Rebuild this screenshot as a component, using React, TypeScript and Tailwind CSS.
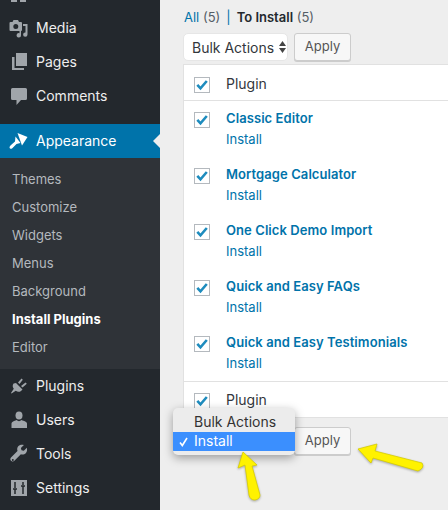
import React from 'react';

const font = { fontFamily: 'Inter' };

function MediaIcon() {
  return (
    <svg width="20" height="20" viewBox="0 0 20 20" fill="#a0a5aa">
      <path fillRule="evenodd" d="M1.500 4H3.500L4.500 2H9L10 4H12a1 1 0 0 1 1 1v7a1 1 0 0 1-1 1H1.500a1 1 0 0 1-1-1V5a1 1 0 0 1 1-1zM6.800 6a2.500 2.500 0 1 0 0 5 2.500 2.500 0 0 0 0-5z" />
      <path d="M14 6h4.500v10.500a2.200 2.200 0 1 1-2-2.100V8H14z" />
      <path d="M10.500 12H12v5.200a2.200 2.200 0 1 1-1.500-2z" />
    </svg>
  );
}

function PagesIcon() {
  return (
    <svg width="20" height="20" viewBox="0 0 20 20" fill="#a0a5aa">
      <path d="M7 1h11v13H7z" />
      <path d="M3 5h2.500v11H15v2H3z" />
    </svg>
  );
}

function CommentsIcon() {
  return (
    <svg width="20" height="20" viewBox="0 0 20 20" fill="#a0a5aa">
      <path d="M3.500 2h13A1.500 1.500 0 0 1 18 3.500v9a1.500 1.500 0 0 1-1.500 1.500H12l-4.500 5v-5h-4A1.500 1.500 0 0 1 2 12.500v-9A1.500 1.500 0 0 1 3.500 2z" />
    </svg>
  );
}

function BrushIcon() {
  return (
    <svg width="20" height="20" viewBox="0 0 20 20" fill="#fff">
      <path d="M8.500 2L18.500 6L13 14.500z" />
      <path d="M6.500 5.500L11.500 12L7.500 13L3 17.500Q1 18.500 .5 16.500Q.5 15 2 14L6 10.500z" />
    </svg>
  );
}

function PlugIcon() {
  return (
    <svg width="20" height="20" viewBox="0 0 20 20" fill="#a0a5aa">
      <path d="M7 7l6.500 6.500-1.500 1.500c-1.800 1.300-3.800 1-5.200-.3l-4.300 2.800-.5-.5 2.800-4.300c-1.300-1.400-1.500-3.400-.2-5.200z" />
      <path d="M9 6.500l3.500-4 1.300 1.300-3.300 4.200z" />
      <path d="M12 10l4.500-3.500 1.300 1.300-4.300 3.700z" />
    </svg>
  );
}

function UserIcon() {
  return (
    <svg width="20" height="20" viewBox="0 0 20 20" fill="#a0a5aa">
      <ellipse cx="10" cy="5.500" rx="3.500" ry="4" />
      <path d="M7.500 10c1.500 1.500 3.500 1.500 5 0l1 .5c2.500.5 4.500 1.500 4.500 3V18H2.500v-4.500c0-1.500 2-2.500 4-3z" />
    </svg>
  );
}

function WrenchIcon() {
  return (
    <svg width="20" height="20" viewBox="0 0 20 20" fill="#a0a5aa">
      <path d="M17.800 3.800l-3 3-2.300-.6-.6-2.300 3-3c-2-.6-4.200-.2-5.400 1.200-1.300 1.300-1.600 3.200-1 4.800l-6.500 6.500c-.9.900-.9 2.400 0 3.400s2.500.9 3.400 0l6.500-6.500c1.700.6 3.600.2 4.900-1 1.300-1.300 1.600-3.500 1-5.500zM3.800 16.900a1 1 0 1 1 0-2 1 1 0 0 1 0 2z" />
    </svg>
  );
}

function SlidersIcon() {
  return (
    <svg width="20" height="20" viewBox="0 0 20 20">
      <path d="M2 2h16v16H2z" fill="#a0a5aa" />
      <path d="M6 4v6M4 11h4M6 11v5M14 4v3M12 8h4M14 8v8" stroke="#23282d" strokeWidth="1.500" fill="none" />
    </svg>
  );
}

function MenuRow({ icon, label }: { icon: React.ReactNode; label: string }) {
  return (
    <div className="flex h-[34px] items-center text-[14px] text-[#eeeeee]">
      <span className="ml-[9px] mr-[7px] flex w-[20px] justify-center">{icon}</span>
      <span className="mb-[2px]">{label}</span>
    </div>
  );
}

function Check() {
  return (
    <span className="flex h-[16px] w-[16px] shrink-0 items-center justify-center border border-[#b4b9be] bg-white">
      <svg width="14" height="14" viewBox="0 0 14 14">
        <path d="M2.300 6.800L5.500 10.300L11.800 3" fill="none" stroke="#1e8cbe" strokeWidth="2.600" />
      </svg>
    </span>
  );
}

function PluginRow({ name }: { name: string }) {
  return (
    <div className="flex h-[56px] items-start pl-[10px] pt-[8px]">
      <span className="mt-[3px]"><Check /></span>
      <div className="ml-[16px] text-[13px] leading-[18px]">
        <div className="font-semibold tracking-[0.08px] text-[#0073aa]">{name}</div>
        <div className="mt-[3px] text-[#0073aa]">Install</div>
      </div>
    </div>
  );
}

function HeadRow({ className }: { className: string }) {
  return (
    <div className={`flex h-[36px] items-center pl-[10px] text-[14px] text-[#32373c] ${className}`}>
      <span className="mt-[3px]"><Check /></span>
      <span className="ml-[16px]">Plugin</span>
    </div>
  );
}

function ApplyButton() {
  return (
    <button className="h-[28px] w-[57px] rounded-[3px] border border-[#cccccc] bg-[#f7f7f7] text-[13px] text-[#555555] shadow-[0_1px_0_#cccccc]">
      Apply
    </button>
  );
}

const subItems = ['Themes', 'Customize', 'Widgets', 'Menus', 'Background', 'Install Plugins', 'Editor'];
const plugins = ['Classic Editor', 'Mortgage Calculator', 'One Click Demo Import', 'Quick and Easy FAQs', 'Quick and Easy Testimonials'];

export default function App() {
  return (
    <div className="relative flex h-[510px] w-[448px] overflow-hidden bg-[#eeeeee]" style={font}>
      {/* Admin sidebar */}
      <aside className="h-full w-[160px] shrink-0 bg-[#23282d]">
        <div className="-mt-[23px]">
          <MenuRow label="" icon={
            <svg width="20" height="20" viewBox="0 0 20 20" fill="#a0a5aa">
              <path d="M2 13h6v5H2zM11 13h6v5h-6z" />
            </svg>
          } />
          <MenuRow icon={<MediaIcon />} label="Media" />
          <MenuRow icon={<PagesIcon />} label="Pages" />
          <MenuRow icon={<CommentsIcon />} label="Comments" />
        </div>
        <div className="relative mt-[11px] flex h-[34px] items-center bg-[#0073aa] text-[14px] text-white">
          <span className="ml-[9px] mr-[7px] flex w-[20px] justify-center"><BrushIcon /></span>
          <span className="mb-[2px]">Appearance</span>
          <span className="absolute right-0 top-[10px] border-y-[7px] border-r-[7px] border-y-transparent border-r-[#eeeeee]" />
        </div>
        <div className="h-[211px] bg-[#2f3338] pt-[7px]">
          {subItems.map((item) => (
            <div
              key={item}
              className={`flex h-[28px] items-center pl-[12px] pt-[2px] text-[13px] ${item === 'Install Plugins' ? 'font-bold text-white' : 'text-[#b4b9be]'}`}
            >
              {item}
            </div>
          ))}
        </div>
        <MenuRow icon={<PlugIcon />} label="Plugins" />
        <MenuRow icon={<UserIcon />} label="Users" />
        <MenuRow icon={<WrenchIcon />} label="Tools" />
        <MenuRow icon={<SlidersIcon />} label="Settings" />
      </aside>

      {/* Plugin table */}
      <main className="min-w-0 flex-1 pl-[23px]">
        <div className="ml-[1px] mt-[8px] h-[18px] text-[13px] leading-[18px] text-[#555d66]">
          <span className="text-[#0073aa]">All</span> (5)
          <span className="mx-[6px] text-[#0073aa]">|</span>
          <span className="font-semibold text-[#23282d]">To Install</span> (5)
        </div>
        <div className="mt-[7px] flex h-[28px] items-start">
          <div className="flex h-[28px] w-[105px] items-center whitespace-nowrap rounded-[5px] border border-[#e6e6e6] bg-white pl-[8px] text-[14px] text-[#32373c]">
            Bulk Actions
            <svg className="ml-[5px]" width="7" height="12" viewBox="0 0 7 12" fill="#444444">
              <path d="M3.500 0L7 5H0zM3.500 12L0 7h7z" />
            </svg>
          </div>
          <span className="ml-[6px]"><ApplyButton /></span>
        </div>
        <div className="mt-[3px] h-[354px] w-[280px] border border-[#e1e1e1] bg-white">
          <HeadRow className="border-b border-[#e1e1e1] pt-[1px]" />
          {plugins.map((name) => (
            <PluginRow key={name} name={name} />
          ))}
          <HeadRow className="border-t border-[#e1e1e1]" />
        </div>
        <div className="ml-[111px] mt-[9px]">
          <ApplyButton />
        </div>
      </main>

      {/* Native select popup */}
      <div className="absolute left-[173px] top-[408px] h-[47px] w-[122px] overflow-hidden rounded-[5px] bg-[#ececec] pt-[5px] text-[14px] shadow-[0_3px_10px_rgba(0,0,0,0.35)]">
        <div className="h-[19px] pl-[21px] leading-[17px] text-[#333333]">Bulk Actions</div>
        <div className="flex h-[19px] items-center bg-[#3b8ffe] text-white">
          <svg className="ml-[6px] mr-[6px]" width="9" height="10" viewBox="0 0 9 10">
            <path d="M1 5.500L3.300 8.500L8 1" fill="none" stroke="#fff" strokeWidth="1.600" />
          </svg>
          <span className="mb-[2px]">Install</span>
        </div>
      </div>

      {/* Annotation arrows */}
      <svg className="absolute left-[230px] top-[445px] drop-shadow-[0_1px_1px_rgba(0,0,0,0.3)]" width="36" height="60" viewBox="0 0 36 60">
        <path d="M13 7L27 20L22 21L30 50Q30 54 25 55Q20 55 19 50L15 20L8 23Z" fill="#fff200" stroke="#d6cd00" strokeWidth=".8" strokeLinejoin="round" />
      </svg>
      <svg className="absolute left-[350px] top-[438px] drop-shadow-[0_1px_1px_rgba(0,0,0,0.3)]" width="80" height="40" viewBox="0 0 80 40">
        <path d="M8 11L27 6L25 13L72 25Q75 30 68 33L23 20L21 25Z" fill="#fff200" stroke="#d6cd00" strokeWidth=".8" strokeLinejoin="round" />
      </svg>
    </div>
  );
}
